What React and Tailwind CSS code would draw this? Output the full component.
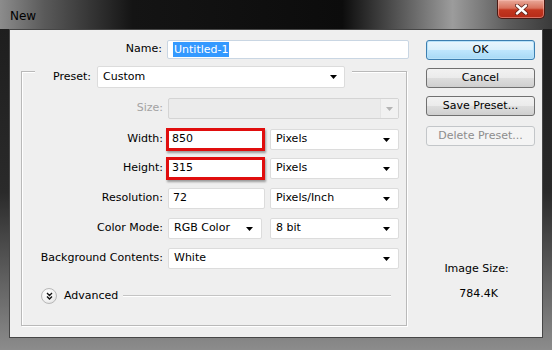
const font = { fontFamily: '"DejaVu Sans", Tahoma, sans-serif' };

const Arrow = ({ color = "#000" }) => (
  <svg width="7" height="4" viewBox="0 0 7 4" className="shrink-0">
    <path d="M0 0H7L3.5 4Z" fill={color} />
  </svg>
);

const Select = ({ value, w, disabled }) => (
  <div
    className={`${w} h-[21px] flex items-center justify-between rounded-[2px] border ${
      disabled ? "border-[#d4d4d4] bg-[#ebebeb]" : "border-[#dcdcdc] bg-white"
    }`}
  >
    <span className="pl-[5px] text-black whitespace-nowrap">{value}</span>
    {disabled ? (
      <div className="h-full w-[18px] flex items-center justify-center border-l border-[#e4e4e4] bg-[#f1f1f1]">
        <Arrow color="#b4b4b4" />
      </div>
    ) : (
      <div className="pr-[8px] flex items-center">
        <Arrow />
      </div>
    )}
  </div>
);

const Input = ({ value, w }) => (
  <div className={`${w} h-[21px] flex items-center rounded-[2px] border border-[#dcdcdc] bg-white pl-[4px] text-black`}>
    {value}
  </div>
);

const RedInput = ({ value }) => (
  <div className="w-[99px] h-[23px] -ml-[2px] flex items-center border-[3px] border-[#e00e0e] bg-white pl-[3px] text-black shadow-[1px_2px_2px_rgba(0,0,0,0.35)]">
    {value}
  </div>
);

const Row = ({ label, dim, className = "", children }) => (
  <div className={`flex items-center h-[21px] ${className}`}>
    <div className={`w-[141px] text-right ${dim ? "text-[#a3a3a3]" : "text-black"}`}>{label}</div>
    <div className="ml-[5px] flex items-center">{children}</div>
  </div>
);

const Button = ({ children, primary, disabled, className = "" }) => {
  let look =
    "border-[#707070] bg-[linear-gradient(to_bottom,#f2f2f2_0%,#ebebeb_48%,#dddddd_52%,#cfcfcf_100%)] text-black";
  if (primary)
    look =
      "border-[#3c7fb1] bg-[linear-gradient(to_bottom,#eaf6fd_0%,#d9f0fc_48%,#bee6fd_52%,#a7d9f5_100%)] text-black shadow-[inset_0_0_0_1px_#b8e2f9]";
  if (disabled) look = "border-[#c3c6c9] bg-[#f4f4f4] text-[#8d8d8d]";
  return (
    <div className={`w-[109px] h-[20px] rounded-[3px] border flex items-center justify-center ${look} ${className}`}>
      {children}
    </div>
  );
};

export default function App() {
  return (
    <div
      className="w-[552px] h-[350px] flex flex-col text-[11px] bg-[linear-gradient(to_bottom,#1c1c1c_0%,#2a2a2a_55%,#8c8c8c_100%)]"
      style={font}
    >
      {/* title bar */}
      <div className="h-[29px] flex items-start justify-between bg-[linear-gradient(to_right,#8c8c8c_0%,#5a5a5a_8%,#141414_24%,#0c0c0c_62%,#9c9c9c_82%,#5c5c5c_92%,#3a3a3a_100%)]">
        <span className="ml-[10px] mt-[7px] text-[12px] text-black">New</span>
        <div className="mr-[7px] w-[48px] h-[19px] rounded-b-[5px] border border-t-0 border-[#4a1a14] bg-[linear-gradient(to_bottom,#e9a99a_0%,#d8715c_45%,#c2361f_55%,#b52a18_100%)] flex items-center justify-center shadow-[inset_0_0_0_1px_rgba(255,200,190,0.45)]">
          <svg width="13" height="11" viewBox="0 0 13 11">
            <path d="M2 1.5L11 9.5M11 1.5L2 9.5" stroke="#5a2018" strokeWidth="4" strokeLinecap="round" />
            <path d="M2 1.5L11 9.5M11 1.5L2 9.5" stroke="#fff" strokeWidth="2.4" strokeLinecap="round" />
          </svg>
        </div>
      </div>

      {/* body */}
      <div className="flex-1 px-[9px] pb-[12px]">
        <div className="h-full border border-[#464646] bg-[#efefef] flex">
          {/* left column */}
          <div className="w-[416px] pl-[11px] pt-[10px]">
            <div className="flex items-center h-[19px]">
              <div className="w-[141px] text-right text-black">Name:</div>
              <div className="ml-[5px] w-[242px] h-[19px] flex items-center rounded-[2px] border border-[#c9d6e3] bg-white pl-[5px]">
                <span className="bg-[#3399ff] text-white px-[1px] leading-[15px]">Untitled-1</span>
              </div>
            </div>

            {/* group box */}
            <div className="mt-[12px] w-[386px] h-[255px] border border-[#b9b9b9] shadow-[inset_1px_1px_0_#ffffff,1px_1px_0_#ffffff] flex flex-col">
              <div className="-mt-[6px] ml-[13px] w-[317px] bg-[#efefef] flex items-center h-[22px] pl-[18px] pr-[7px]">
                <div className="w-[44px] text-black">Preset:</div>
                <div className="w-[248px] h-[22px] flex items-center justify-between rounded-[2px] border border-[#dcdcdc] bg-white">
                  <span className="pl-[5px] text-black">Custom</span>
                  <div className="pr-[7px] flex items-center">
                    <Arrow />
                  </div>
                </div>
              </div>

              <div className="mt-[10px] flex flex-col">
                <Row label="Size:" dim>
                  <Select value="" w="w-[231px]" disabled />
                </Row>
                <Row label="Width:" className="mt-[10px]">
                  <RedInput value="850" />
                  <div className="ml-[5px]">
                    <Select value="Pixels" w="w-[129px]" />
                  </div>
                </Row>
                <Row label="Height:" className="mt-[8px]">
                  <RedInput value="315" />
                  <div className="ml-[5px]">
                    <Select value="Pixels" w="w-[129px]" />
                  </div>
                </Row>
                <Row label="Resolution:" className="mt-[9px]">
                  <Input value="72" w="w-[97px]" />
                  <div className="ml-[5px]">
                    <Select value="Pixels/Inch" w="w-[129px]" />
                  </div>
                </Row>
                <Row label="Color Mode:" className="mt-[9px]">
                  <Select value="RGB Color" w="w-[94px]" />
                  <div className="ml-[8px]">
                    <Select value="8 bit" w="w-[129px]" />
                  </div>
                </Row>
                <Row label="Background Contents:" className="mt-[9px]">
                  <Select value="White" w="w-[231px]" />
                </Row>
              </div>

              {/* advanced */}
              <div className="mt-[19px] ml-[19px] mr-[15px] h-[16px] flex items-center">
                <div className="w-[16px] h-[16px] rounded-full border border-[#b8b8b8] bg-[radial-gradient(circle_at_40%_35%,#ffffff_0%,#f2f2f2_55%,#d6d6d6_100%)] flex items-center justify-center">
                  <svg width="7" height="8" viewBox="0 0 7 8">
                    <path d="M1 1L3.5 3.5L6 1M1 4.5L3.5 7L6 4.5" stroke="#111" strokeWidth="1.4" fill="none" />
                  </svg>
                </div>
                <span className="ml-[7px] text-black">Advanced</span>
                <div className="ml-[5px] flex-1 h-[2px] border-t border-[#c4c4c4] border-b border-b-white" />
              </div>
            </div>
          </div>

          {/* right column */}
          <div className="w-[109px] pt-[10px] flex flex-col">
            <Button primary>OK</Button>
            <Button className="mt-[8px]">Cancel</Button>
            <Button className="mt-[8px]">Save Preset...</Button>
            <Button className="mt-[10px]" disabled>
              Delete Preset...
            </Button>
            <div className="mt-[116px] pr-[8px] text-center text-black leading-[13px]">Image Size:</div>
            <div className="mt-[12px] pr-[4px] text-center text-black leading-[13px]">784.4K</div>
          </div>
        </div>
      </div>
    </div>
  );
}
